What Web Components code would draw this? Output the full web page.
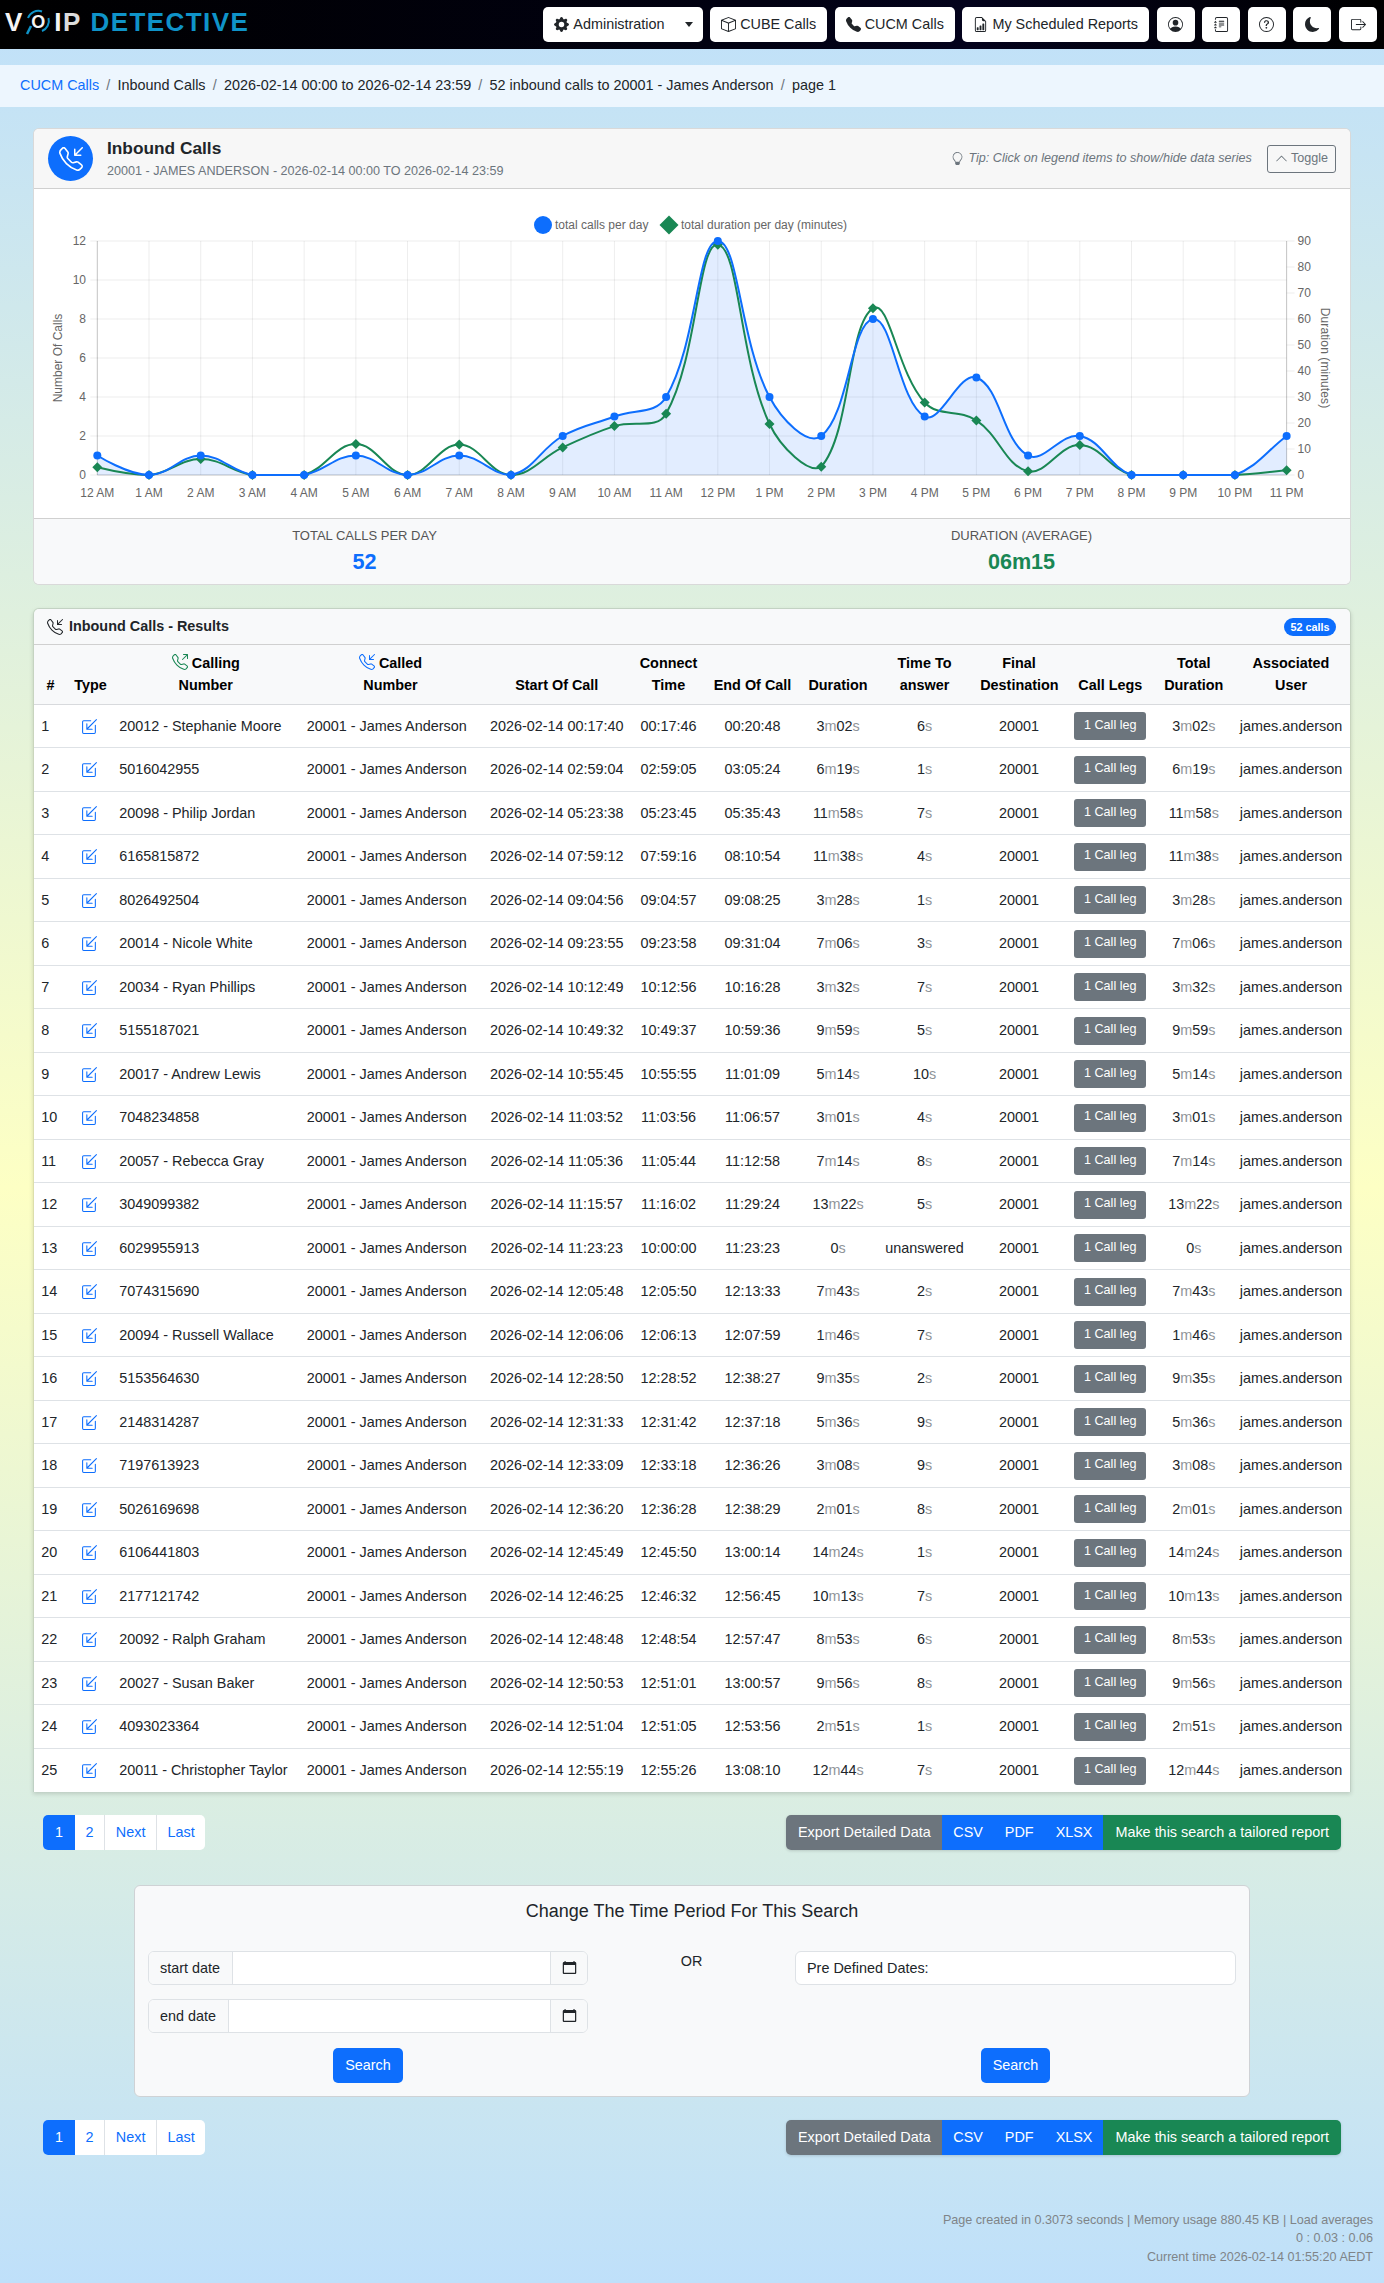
<!DOCTYPE html>
<html lang="en">
<head>
<meta charset="utf-8">
<title>Inbound Calls</title>
<style>
  html, body { margin: 0; padding: 0; }
  body {
    height: 2283px;
    overflow: hidden;
    font-family: "Liberation Sans", Arial, sans-serif;
    font-size: 14.4px;
    line-height: 1.5;
    color: #212529;
    background: linear-gradient(to bottom, #bfe0fa 0%, #fdffc4 52%, #bfe0fa 100%);
  }
</style>
</head>
<body>
<vd-navbar></vd-navbar>
<vd-breadcrumb>
  <a href="#">CUCM Calls</a>
  <span>Inbound Calls</span>
  <span>2026-02-14 00:00 to 2026-02-14 23:59</span>
  <span>52 inbound calls to 20001 - James Anderson</span>
  <span>page 1</span>
</vd-breadcrumb>
<vd-chart-card></vd-chart-card>
<vd-results-card></vd-results-card>
<vd-controls></vd-controls>
<vd-search-card></vd-search-card>
<vd-controls></vd-controls>
<vd-footer></vd-footer>

<script>
const ICONS = {
  gear: 'M9.405 1.05c-.413-1.4-2.397-1.4-2.81 0l-.1.34a1.464 1.464 0 0 1-2.105.872l-.31-.17c-1.283-.698-2.686.705-1.987 1.987l.169.311c.446.82.023 1.841-.872 2.105l-.34.1c-1.4.413-1.4 2.397 0 2.81l.34.1a1.464 1.464 0 0 1 .872 2.105l-.17.31c-.698 1.283.705 2.686 1.987 1.987l.311-.169a1.464 1.464 0 0 1 2.105.872l.1.34c.413 1.4 2.397 1.4 2.81 0l.1-.34a1.464 1.464 0 0 1 2.105-.872l.31.17c1.283.698 2.686-.705 1.987-1.987l-.169-.311a1.464 1.464 0 0 1 .872-2.105l.34-.1c1.4-.413 1.4-2.397 0-2.81l-.34-.1a1.464 1.464 0 0 1-.872-2.105l.17-.31c.698-1.283-.705-2.686-1.987-1.987l-.311.169a1.464 1.464 0 0 1-2.105-.872zM8 10.93a2.929 2.929 0 1 1 0-5.86 2.929 2.929 0 0 1 0 5.858z',
  box: 'M8.186 1.113a.5.5 0 0 0-.372 0L1.846 3.5 8 5.961 14.154 3.5zM15 4.239l-6.5 2.6v7.922l6.5-2.6V4.24zM7.5 14.762V6.838L1 4.239v7.925zM7.443.184a1.5 1.5 0 0 1 1.114 0l7.129 2.852A.5.5 0 0 1 16 3.5v8.662a1 1 0 0 1-.629.928l-7.185 2.874a.5.5 0 0 1-.372 0L.63 13.09a1 1 0 0 1-.63-.928V3.5a.5.5 0 0 1 .314-.464z',
  phone: 'M1.885.511a1.745 1.745 0 0 1 2.61.163L6.29 2.98c.329.423.445.974.315 1.494l-.547 2.19a.68.68 0 0 0 .178.643l2.457 2.457a.68.68 0 0 0 .644.178l2.189-.547a1.75 1.75 0 0 1 1.494.315l2.306 1.794c.829.645.905 1.87.163 2.611l-1.034 1.034c-.74.74-1.846 1.065-2.877.702a18.6 18.6 0 0 1-7.01-4.42 18.6 18.6 0 0 1-4.42-7.009c-.362-1.03-.037-2.137.703-2.877z',
  report: 'M10 13.5a.5.5 0 0 0 .5.5h1a.5.5 0 0 0 .5-.5v-6a.5.5 0 0 0-.5-.5h-1a.5.5 0 0 0-.5.5zm-2.5.5a.5.5 0 0 1-.5-.5v-4a.5.5 0 0 1 .5-.5h1a.5.5 0 0 1 .5.5v4a.5.5 0 0 1-.5.5zm-3 0a.5.5 0 0 1-.5-.5v-2a.5.5 0 0 1 .5-.5h1a.5.5 0 0 1 .5.5v2a.5.5 0 0 1-.5.5z M14 14V4.5L9.5 0H4a2 2 0 0 0-2 2v12a2 2 0 0 0 2 2h8a2 2 0 0 0 2-2M9.5 3A1.5 1.5 0 0 0 11 4.5h2V14a1 1 0 0 1-1 1H4a1 1 0 0 1-1-1V2a1 1 0 0 1 1-1h5.5z',
  person: 'M11 6a3 3 0 1 1-6 0 3 3 0 0 1 6 0 M0 8a8 8 0 1 1 16 0A8 8 0 0 1 0 8m8-7a7 7 0 0 0-5.468 11.37C3.242 11.226 4.805 10 8 10s4.757 1.225 5.468 2.37A7 7 0 0 0 8 1',
  journal: 'M5 10.5a.5.5 0 0 1 .5-.5h2a.5.5 0 0 1 0 1h-2a.5.5 0 0 1-.5-.5m0-2a.5.5 0 0 1 .5-.5h5a.5.5 0 0 1 0 1h-5a.5.5 0 0 1-.5-.5m0-2a.5.5 0 0 1 .5-.5h5a.5.5 0 0 1 0 1h-5a.5.5 0 0 1-.5-.5m0-2a.5.5 0 0 1 .5-.5h5a.5.5 0 0 1 0 1h-5a.5.5 0 0 1-.5-.5 M3 0h10a2 2 0 0 1 2 2v12a2 2 0 0 1-2 2H3a2 2 0 0 1-2-2v-1h1v1a1 1 0 0 0 1 1h10a1 1 0 0 0 1-1V2a1 1 0 0 0-1-1H3a1 1 0 0 0-1 1v1H1V2a2 2 0 0 1 2-2 M1 5v-.5a.5.5 0 0 1 1 0V5h.5a.5.5 0 0 1 0 1h-2a.5.5 0 0 1 0-1zm0 3v-.5a.5.5 0 0 1 1 0V8h.5a.5.5 0 0 1 0 1h-2a.5.5 0 0 1 0-1zm0 3v-.5a.5.5 0 0 1 1 0v.5h.5a.5.5 0 0 1 0 1h-2a.5.5 0 0 1 0-1z',
  question: 'M8 15A7 7 0 1 1 8 1a7 7 0 0 1 0 14m0 1A8 8 0 1 0 8 0a8 8 0 0 0 0 16 M5.255 5.786a.237.237 0 0 0 .241.247h.825c.138 0 .248-.113.266-.25.09-.656.54-1.134 1.342-1.134.686 0 1.314.343 1.314 1.168 0 .635-.374.927-.965 1.371-.673.489-1.206 1.06-1.168 1.987l.003.217a.25.25 0 0 0 .25.246h.811a.25.25 0 0 0 .25-.25v-.105c0-.718.273-.927 1.01-1.486.609-.463 1.244-.977 1.244-2.056 0-1.511-1.276-2.241-2.673-2.241-1.267 0-2.655.59-2.75 2.286m1.557 5.763c0 .533.425.927 1.01.927.609 0 1.028-.394 1.028-.927 0-.552-.42-.94-1.029-.94-.584 0-1.009.388-1.009.94',
  moon: 'M6 .278a.77.77 0 0 1 .08.858 7.2 7.2 0 0 0-.878 3.46c0 4.021 3.278 7.277 7.318 7.277q.792-.001 1.533-.16a.79.79 0 0 1 .81.316.73.73 0 0 1-.031.893A8.35 8.35 0 0 1 8.344 16C3.734 16 0 12.286 0 7.71 0 4.266 2.114 1.312 5.124.06A.75.75 0 0 1 6 .278',
  logout: 'M10 12.5a.5.5 0 0 1-.5.5h-8a.5.5 0 0 1-.5-.5v-9a.5.5 0 0 1 .5-.5h8a.5.5 0 0 1 .5.5v2a.5.5 0 0 0 1 0v-2A1.5 1.5 0 0 0 9.5 2h-8A1.5 1.5 0 0 0 0 3.5v9A1.5 1.5 0 0 0 1.5 14h8a1.5 1.5 0 0 0 1.5-1.5v-2a.5.5 0 0 0-1 0z M15.854 8.354a.5.5 0 0 0 0-.708l-3-3a.5.5 0 0 0-.708.708L14.293 7.5H5.5a.5.5 0 0 0 0 1h8.793l-2.147 2.146a.5.5 0 0 0 .708.708z',
  bulb: 'M2 6a6 6 0 1 1 10.174 4.31c-.203.196-.359.4-.453.619l-.762 1.769A.5.5 0 0 1 10.5 13a.5.5 0 0 1 0 1 .5.5 0 0 1 0 1l-.224.447a1 1 0 0 1-.894.553H6.618a1 1 0 0 1-.894-.553L5.5 15a.5.5 0 0 1 0-1 .5.5 0 0 1 0-1 .5.5 0 0 1-.46-.302l-.761-1.77a2 2 0 0 0-.453-.618A5.98 5.98 0 0 1 2 6m6-5a5 5 0 0 0-3.479 8.592c.263.254.514.564.676.941L5.83 12h4.342l.632-1.467c.162-.377.413-.687.676-.941A5 5 0 0 0 8 1',
  chevron: 'M7.646 4.646a.5.5 0 0 1 .708 0l6 6a.5.5 0 0 1-.708.708L8 5.707l-5.646 5.647a.5.5 0 0 1-.708-.708z',
  inbound: 'M15.854.146a.5.5 0 0 1 0 .708L11.707 5H14.5a.5.5 0 0 1 0 1h-4a.5.5 0 0 1-.5-.5v-4a.5.5 0 0 1 1 0v2.793L15.146.146a.5.5 0 0 1 .708 0m-12.2 1.182a.678.678 0 0 0-1.015-.063L1.605 2.3c-.483.484-.661 1.169-.45 1.77a17.6 17.6 0 0 0 4.168 6.608 17.6 17.6 0 0 0 6.608 4.168c.601.211 1.286.033 1.77-.45l1.034-1.034a.678.678 0 0 0-.063-1.015l-2.307-1.794a.68.68 0 0 0-.58-.122l-2.19.547a1.75 1.75 0 0 1-1.657-.459L5.482 8.062a1.75 1.75 0 0 1-.46-1.657l.548-2.19a.68.68 0 0 0-.122-.58zM1.884.511a1.745 1.745 0 0 1 2.612.163L6.29 2.98c.329.423.445.974.315 1.494l-.547 2.19a.68.68 0 0 0 .178.643l2.457 2.457a.68.68 0 0 0 .644.178l2.189-.547a1.75 1.75 0 0 1 1.494.315l2.306 1.794c.829.645.905 1.87.163 2.611l-1.034 1.034c-.74.74-1.846 1.065-2.877.702a18.6 18.6 0 0 1-7.01-4.42 18.6 18.6 0 0 1-4.42-7.009c-.362-1.03-.037-2.137.703-2.877z',
  outbound: 'M3.654 1.328a.678.678 0 0 0-1.015-.063L1.605 2.3c-.483.484-.661 1.169-.45 1.77a17.6 17.6 0 0 0 4.168 6.608 17.6 17.6 0 0 0 6.608 4.168c.601.211 1.286.033 1.77-.45l1.034-1.034a.678.678 0 0 0-.063-1.015l-2.307-1.794a.68.68 0 0 0-.58-.122l-2.19.547a1.75 1.75 0 0 1-1.657-.459L5.482 8.062a1.75 1.75 0 0 1-.46-1.657l.548-2.19a.68.68 0 0 0-.122-.58zM1.884.511a1.745 1.745 0 0 1 2.612.163L6.29 2.98c.329.423.445.974.315 1.494l-.547 2.19a.68.68 0 0 0 .178.643l2.457 2.457a.68.68 0 0 0 .644.178l2.189-.547a1.75 1.75 0 0 1 1.494.315l2.306 1.794c.829.645.905 1.87.163 2.611l-1.034 1.034c-.74.74-1.846 1.065-2.877.702a18.6 18.6 0 0 1-7.01-4.42 18.6 18.6 0 0 1-4.42-7.009c-.362-1.03-.037-2.137.703-2.877zM11 .5a.5.5 0 0 1 .5-.5h4a.5.5 0 0 1 .5.5v4a.5.5 0 0 1-1 0V1.707l-4.146 4.147a.5.5 0 0 1-.708-.708L14.293 1H11.5a.5.5 0 0 1-.5-.5',
  boxin: 'M9.636 2.5a.5.5 0 0 0-.5-.5H2.5A1.5 1.5 0 0 0 1 3.5v10A1.5 1.5 0 0 0 2.5 15h10a1.5 1.5 0 0 0 1.5-1.5V6.864a.5.5 0 0 0-1 0V13.5a.5.5 0 0 1-.5.5h-10a.5.5 0 0 1-.5-.5v-10a.5.5 0 0 1 .5-.5h6.636a.5.5 0 0 0 .5-.5 M5 10.5a.5.5 0 0 0 .5.5h5a.5.5 0 0 0 0-1H6.707l8.147-8.146a.5.5 0 0 0-.708-.708L6 9.293V5.5a.5.5 0 0 0-1 0z',
  calendar: 'M2.5 1.2h1.6v1H12V1.2h1.6v1h.4A1.2 1.2 0 0 1 15.2 3.4v10.4A1.2 1.2 0 0 1 14 15H2a1.2 1.2 0 0 1-1.2-1.2V3.4A1.2 1.2 0 0 1 2 2.2h.5zM2.1 5.4v8.1c0 .1.1.2.2.2h11.4c.1 0 .2-.1.2-.2V5.4z'
};

class VdIcon extends HTMLElement {
  connectedCallback() {
    const size = this.getAttribute('size') || '16';
    this.root = this.attachShadow({ mode: 'open' });
    this.root.innerHTML = `
      <style>
        :host { display: inline-flex; flex: none; line-height: 0; }
      </style>
      <svg xmlns="http://www.w3.org/2000/svg" width="${size}" height="${size}" viewBox="0 0 16 16" fill="currentColor" fill-rule="evenodd">
        <path d="${ICONS[this.getAttribute('name')]}"/>
      </svg>`;
  }
}
customElements.define('vd-icon', VdIcon);

class VdNavButton extends HTMLElement {
  constructor() {
    super();
    this.root = this.attachShadow({ mode: 'open' });
    this.root.innerHTML = `
      <style>
        :host {
          display: inline-flex;
          align-items: center;
          justify-content: center;
          gap: 4px;
          height: 35px;
          min-width: 38px;
          box-sizing: border-box;
          padding: 0 11px;
          background: #fff;
          border-radius: 5px;
          color: #212529;
          font-size: 14.4px;
          white-space: nowrap;
        }
      </style>
      <slot></slot>`;
  }
}
customElements.define('vd-nav-button', VdNavButton);

class VdNavbar extends HTMLElement {
  constructor() {
    super();
    this.root = this.attachShadow({ mode: 'open' });
    this.root.innerHTML = `
      <style>
        :host {
          display: flex;
          align-items: center;
          justify-content: space-between;
          height: 49px;
          box-sizing: border-box;
          padding: 0 7px 0 5px;
          background: linear-gradient(90deg, #000 0%, #010112 55%, #03021c 70%, #000 100%);
        }
        .logo {
          display: flex;
          align-items: center;
          height: 34px;
          margin-top: -6px;
          font-weight: 700;
          font-size: 26px;
          line-height: 34px;
          color: #f4f4f4;
        }
        .ring {
          position: relative;
          display: flex;
          justify-content: center;
          width: 26px;
          margin: 0 3px 0 3px;
          font-size: 18px;
        }
        .ring svg { position: absolute; left: 0; top: 4px; }
        .p { margin-left: 1.5px; color: #dcdcdc; }
        .detective { margin-left: 10px; letter-spacing: 1.45px; color: #0f93c8; }
        nav { display: flex; gap: 7.6px; }
        .caret {
          width: 0;
          height: 0;
          margin-left: 16px;
          margin-right: -1px;
          border-top: 5px solid #212529;
          border-left: 4px solid transparent;
          border-right: 4px solid transparent;
        }
      </style>
      <div class="logo">
        <span>V</span>
        <span class="ring">O
          <svg width="26" height="30" viewBox="0 0 26 30" fill="none" stroke="#0f93c8" stroke-width="2">
            <path d="M3 9 A11 11 0 0 1 17 2.5"/>
            <path d="M23.5 9 A11 11 0 0 1 17 22"/>
            <path d="M6 17 L2 25" stroke-width="2.5"/>
          </svg>
        </span>
        <span>I</span>
        <span class="p">P</span>
        <span class="detective">DETECTIVE</span>
      </div>
      <nav>
        <vd-nav-button><vd-icon name="gear" size="15"></vd-icon> Administration <span class="caret"></span></vd-nav-button>
        <vd-nav-button><vd-icon name="box" size="15"></vd-icon> CUBE Calls</vd-nav-button>
        <vd-nav-button><vd-icon name="phone" size="15"></vd-icon> CUCM Calls</vd-nav-button>
        <vd-nav-button><vd-icon name="report" size="15"></vd-icon> My Scheduled Reports</vd-nav-button>
        <vd-nav-button><vd-icon name="person" size="15"></vd-icon></vd-nav-button>
        <vd-nav-button><vd-icon name="journal" size="15"></vd-icon></vd-nav-button>
        <vd-nav-button><vd-icon name="question" size="15"></vd-icon></vd-nav-button>
        <vd-nav-button><vd-icon name="moon" size="15"></vd-icon></vd-nav-button>
        <vd-nav-button><vd-icon name="logout" size="15"></vd-icon></vd-nav-button>
      </nav>`;
  }
}
customElements.define('vd-navbar', VdNavbar);

class VdBreadcrumb extends HTMLElement {
  constructor() {
    super();
    this.root = this.attachShadow({ mode: 'open' });
    this.root.innerHTML = `
      <style>
        :host {
          display: flex;
          align-items: center;
          height: 42px;
          box-sizing: border-box;
          margin-top: 16px;
          padding: 0 20px;
          background: #edf6fe;
          font-size: 14.4px;
          color: #212529;
        }
        ::slotted(*) { white-space: nowrap; color: #212529; text-decoration: none; }
        ::slotted(a) { color: #0d6efd; }
        ::slotted(*:not(:first-child))::before { content: "/"; color: #6c757d; padding: 0 7.2px; }
      </style>
      <slot></slot>`;
  }
}
customElements.define('vd-breadcrumb', VdBreadcrumb);

class VdChart extends HTMLElement {
  constructor() {
    super();
    this.root = this.attachShadow({ mode: 'open' });
    this.calls = [1, 0, 1, 0, 0, 1, 0, 1, 0, 2, 3, 4, 12, 4, 2, 8, 3, 5, 1, 2, 0, 0, 0, 2];
    this.minutes = [2.95, 0, 6.15, 0, 0, 11.9, 0, 11.7, 0, 10.6, 18.8, 23.6, 88.6, 19.6, 3.2, 64.1, 27.9, 21, 1.4, 11.5, 0, 0, 0, 1.8];
    this.hours = ['12 AM', '1 AM', '2 AM', '3 AM', '4 AM', '5 AM', '6 AM', '7 AM', '8 AM', '9 AM', '10 AM', '11 AM',
      '12 PM', '1 PM', '2 PM', '3 PM', '4 PM', '5 PM', '6 PM', '7 PM', '8 PM', '9 PM', '10 PM', '11 PM'];
    this.renderHTML();
  }

  // same bezier rule as a tension 0.4 line chart, control points capped to the plot area
  spline(points) {
    const top = 241;
    const bottom = 475;
    const cap = (y) => Math.min(bottom, Math.max(top, y));
    let d = `M${points[0].x} ${points[0].y}`;
    let out = points[0];
    for (let i = 1; i < points.length; i++) {
      const prev = points[i - 1];
      const cur = points[i];
      const next = points[i + 1] || cur;
      const d01 = Math.hypot(cur.x - prev.x, cur.y - prev.y);
      const d12 = Math.hypot(next.x - cur.x, next.y - cur.y);
      const sum = d01 + d12;
      const fa = 0.4 * (sum ? d01 / sum : 0);
      const fb = 0.4 * (sum ? d12 / sum : 0);
      const inX = cur.x - fa * (next.x - prev.x);
      const inY = cap(cur.y - fa * (next.y - prev.y));
      d += `C${out.cx ?? out.x} ${out.cy ?? out.y} ${inX} ${inY} ${cur.x} ${cur.y}`;
      out = { x: cur.x, y: cur.y, cx: cur.x + fb * (next.x - prev.x), cy: cap(cur.y + fb * (next.y - prev.y)) };
    }
    return d;
  }

  renderHTML() {
    const left = 97.3;
    const step = 51.71;
    const bottom = 475;
    const right = left + step * 23;
    const px = (i) => left + i * step;
    const blue = this.calls.map((v, i) => ({ x: px(i), y: bottom - v * 19.5 }));
    const green = this.minutes.map((v, i) => ({ x: px(i), y: bottom - v * 2.6 }));
    const blueLine = this.spline(blue);
    const greenLine = this.spline(green);
    const diamond = (x, y, r) => `M${x} ${y - r}L${x + r} ${y}L${x} ${y + r}L${x - r} ${y}Z`;

    let grid = '';
    for (let i = 0; i < 24; i++) {
      grid += `<line x1="${px(i)}" y1="241" x2="${px(i)}" y2="475" class="grid"/>`;
      grid += `<text x="${px(i)}" y="497" text-anchor="middle">${this.hours[i]}</text>`;
    }
    for (let v = 0; v <= 12; v += 2) {
      const y = bottom - v * 19.5;
      grid += `<line x1="${left - 7}" y1="${y}" x2="${right}" y2="${y}" class="grid"/>`;
      grid += `<text x="86" y="${y + 3.5}" text-anchor="end">${v}</text>`;
    }
    for (let v = 0; v <= 90; v += 10) {
      const y = bottom - v * 2.6;
      grid += `<line x1="${right}" y1="${y}" x2="${right + 8}" y2="${y}" class="grid"/>`;
      grid += `<text x="1297.5" y="${y + 3.5}">${v}</text>`;
    }

    this.root.innerHTML = `
      <style>
        :host { display: block; height: 329px; }
        svg { display: block; }
        text { font: 12px "Liberation Sans", Arial, sans-serif; fill: #666; }
        .grid { stroke: rgba(0, 0, 0, 0.07); stroke-width: 1; }
        .axis { stroke: rgba(0, 0, 0, 0.18); stroke-width: 1; }
      </style>
      <svg xmlns="http://www.w3.org/2000/svg" width="1316" height="329" viewBox="34 189 1316 329">
        <circle cx="543" cy="225" r="9" fill="#0d6efd"/>
        <text x="555" y="228.5">total calls per day</text>
        <path d="${diamond(669, 225, 9.5)}" fill="#198754"/>
        <text x="681" y="228.5">total duration per day (minutes)</text>
        ${grid}
        <line x1="${left}" y1="241" x2="${left}" y2="475" class="axis"/>
        <line x1="${right}" y1="241" x2="${right}" y2="475" class="axis"/>
        <line x1="${left}" y1="475" x2="${right}" y2="475" class="axis"/>
        <text transform="translate(62 358) rotate(-90)" text-anchor="middle">Number Of Calls</text>
        <text transform="translate(1320.5 358) rotate(90)" text-anchor="middle" style="letter-spacing:.1px">Duration (minutes)</text>
        <path d="${blueLine}L${right} ${bottom}L${left} ${bottom}Z" fill="rgba(13,110,253,0.12)"/>
        <path d="${greenLine}" fill="none" stroke="#198754" stroke-width="2"/>
        ${green.map((p) => `<path d="${diamond(p.x, p.y, 5)}" fill="#198754"/>`).join('')}
        <path d="${blueLine}" fill="none" stroke="#0d6efd" stroke-width="2"/>
        ${blue.map((p) => `<circle cx="${p.x}" cy="${p.y}" r="4" fill="#0d6efd"/>`).join('')}
      </svg>`;
  }
}
customElements.define('vd-chart', VdChart);

class VdChartCard extends HTMLElement {
  constructor() {
    super();
    this.root = this.attachShadow({ mode: 'open' });
    this.root.innerHTML = `
      <style>
        :host {
          display: block;
          margin: 21px 33px 0;
          background: #fff;
          border: 1px solid rgba(0, 0, 0, 0.15);
          border-radius: 6px;
          overflow: hidden;
        }
        header {
          display: flex;
          align-items: center;
          height: 60px;
          box-sizing: border-box;
          padding: 0 14px 0 14px;
          background: #f7f7f7;
          border-bottom: 1px solid #d0d0d0;
        }
        .badge {
          display: flex;
          align-items: center;
          justify-content: center;
          width: 45px;
          height: 45px;
          border-radius: 50%;
          background: #0d6efd;
          color: #fff;
        }
        .titles { margin-left: 14px; flex: 1; }
        h1 { margin: 0; font-size: 17.3px; line-height: 22px; font-weight: 700; color: #212529; }
        .sub { margin-top: 3px; font-size: 12.6px; line-height: 18px; color: #6c757d; }
        .tip { display: flex; align-items: center; gap: 4px; font-size: 12.6px; font-style: italic; color: #6c757d; }
        .toggle {
          display: flex;
          align-items: center;
          gap: 3px;
          height: 28px;
          box-sizing: border-box;
          margin-left: 15px;
          padding: 0 7px;
          border: 1px solid #6c757d;
          border-radius: 3px;
          font-size: 12.6px;
          color: #6c757d;
        }
        .strip {
          display: grid;
          grid-template-columns: 1fr 1fr;
          height: 66px;
          padding: 7px 0 0 2px;
          box-sizing: border-box;
          background: #f8f9fa;
          border-top: 1px solid #d0d0d0;
          text-align: center;
        }
        .label { font-size: 13px; line-height: 20px; color: #555; }
        .value { margin-top: 1px; font-size: 21.6px; line-height: 30px; font-weight: 700; }
        .blue { color: #0d6efd; }
        .green { color: #198754; }
      </style>
      <header>
        <div class="badge"><vd-icon name="inbound" size="24"></vd-icon></div>
        <div class="titles">
          <h1>Inbound Calls</h1>
          <div class="sub">20001 - JAMES ANDERSON - 2026-02-14 00:00 TO 2026-02-14 23:59</div>
        </div>
        <div class="tip"><vd-icon name="bulb" size="13"></vd-icon><span>Tip: Click on legend items to show/hide data series</span></div>
        <div class="toggle"><vd-icon name="chevron" size="13"></vd-icon><span>Toggle</span></div>
      </header>
      <vd-chart></vd-chart>
      <div class="strip">
        <div><div class="label">TOTAL CALLS PER DAY</div><div class="value blue">52</div></div>
        <div><div class="label">DURATION (AVERAGE)</div><div class="value green">06m15</div></div>
      </div>`;
  }
}
customElements.define('vd-chart-card', VdChartCard);

const CALLS = [
  ['20012 - Stephanie Moore', '00:17:40', '00:17:46', '00:20:48', '3m02s', '6s'],
  ['5016042955', '02:59:04', '02:59:05', '03:05:24', '6m19s', '1s'],
  ['20098 - Philip Jordan', '05:23:38', '05:23:45', '05:35:43', '11m58s', '7s'],
  ['6165815872', '07:59:12', '07:59:16', '08:10:54', '11m38s', '4s'],
  ['8026492504', '09:04:56', '09:04:57', '09:08:25', '3m28s', '1s'],
  ['20014 - Nicole White', '09:23:55', '09:23:58', '09:31:04', '7m06s', '3s'],
  ['20034 - Ryan Phillips', '10:12:49', '10:12:56', '10:16:28', '3m32s', '7s'],
  ['5155187021', '10:49:32', '10:49:37', '10:59:36', '9m59s', '5s'],
  ['20017 - Andrew Lewis', '10:55:45', '10:55:55', '11:01:09', '5m14s', '10s'],
  ['7048234858', '11:03:52', '11:03:56', '11:06:57', '3m01s', '4s'],
  ['20057 - Rebecca Gray', '11:05:36', '11:05:44', '11:12:58', '7m14s', '8s'],
  ['3049099382', '11:15:57', '11:16:02', '11:29:24', '13m22s', '5s'],
  ['6029955913', '11:23:23', '10:00:00', '11:23:23', '0s', 'unanswered'],
  ['7074315690', '12:05:48', '12:05:50', '12:13:33', '7m43s', '2s'],
  ['20094 - Russell Wallace', '12:06:06', '12:06:13', '12:07:59', '1m46s', '7s'],
  ['5153564630', '12:28:50', '12:28:52', '12:38:27', '9m35s', '2s'],
  ['2148314287', '12:31:33', '12:31:42', '12:37:18', '5m36s', '9s'],
  ['7197613923', '12:33:09', '12:33:18', '12:36:26', '3m08s', '9s'],
  ['5026169698', '12:36:20', '12:36:28', '12:38:29', '2m01s', '8s'],
  ['6106441803', '12:45:49', '12:45:50', '13:00:14', '14m24s', '1s'],
  ['2177121742', '12:46:25', '12:46:32', '12:56:45', '10m13s', '7s'],
  ['20092 - Ralph Graham', '12:48:48', '12:48:54', '12:57:47', '8m53s', '6s'],
  ['20027 - Susan Baker', '12:50:53', '12:51:01', '13:00:57', '9m56s', '8s'],
  ['4093023364', '12:51:04', '12:51:05', '12:53:56', '2m51s', '1s'],
  ['20011 - Christopher Taylor', '12:55:19', '12:55:26', '13:08:10', '12m44s', '7s']
];

// 3m02s -> the unit letters are drawn lighter than the numbers
const duration = (text) => text.replace(/[ms]/g, (unit) => `<i>${unit}</i>`);

class VdCallsTable extends HTMLElement {
  constructor() {
    super();
    this.root = this.attachShadow({ mode: 'open' });
    this.renderHTML();
  }

  renderRow(call, index) {
    const [from, start, connect, end, length, answer] = call;
    return `
      <tr>
        <td class="l">${index + 1}</td>
        <td><vd-icon class="type" name="boxin" size="17"></vd-icon></td>
        <td class="l">${from}</td>
        <td class="l">20001 - James Anderson</td>
        <td>2026-02-14 ${start}</td>
        <td>${connect}</td>
        <td>${end}</td>
        <td>${duration(length)}</td>
        <td>${answer === 'unanswered' ? answer : duration(answer)}</td>
        <td>20001</td>
        <td><span class="legs">1 Call leg</span></td>
        <td>${duration(length)}</td>
        <td>james.anderson</td>
      </tr>`;
  }

  renderHTML() {
    const widths = [33, 45, 187.5, 182, 150.5, 73, 95, 76, 97, 92, 90.5, 76.5, 118];
    this.root.innerHTML = `
      <style>
        :host { display: block; }
        table { width: 1316px; table-layout: fixed; border-collapse: collapse; font-size: 14.4px; line-height: 21.6px; }
        th, td { padding: 7.2px; text-align: center; white-space: nowrap; }
        th { padding-top: 8.2px; font-weight: 700; vertical-align: bottom; background: #f8f9fa; color: #000; border-bottom: 1px solid #d8dadd; }
        td { padding-top: 7.7px; padding-bottom: 6.7px; vertical-align: middle; background: #fff; border-bottom: 1px solid #dee2e6; color: #212529; }
        tbody tr { height: 43.5px; }
        tr:last-child td { border-bottom: 0; }
        td.l { text-align: left; }
        i { font-style: normal; color: #8f9499; }
        .type { color: #0d6efd; vertical-align: -4px; }
        .out { color: #198754; vertical-align: -2px; }
        .in { color: #0d6efd; vertical-align: -2px; }
        .legs {
          display: inline-block;
          min-width: 72px;
          box-sizing: border-box;
          padding: 3.6px 0 5.6px;
          background: #6c757d;
          border-radius: 3px;
          color: #fff;
          font-size: 12.6px;
          line-height: 18.9px;
          vertical-align: middle;
        }
      </style>
      <table>
        <colgroup>${widths.map((w) => `<col style="width:${w}px">`).join('')}</colgroup>
        <thead>
          <tr>
            <th>#</th>
            <th>Type</th>
            <th><vd-icon class="out" name="outbound" size="16"></vd-icon> Calling<br>Number</th>
            <th><vd-icon class="in" name="inbound" size="16"></vd-icon> Called<br>Number</th>
            <th>Start Of Call</th>
            <th>Connect<br>Time</th>
            <th>End Of Call</th>
            <th>Duration</th>
            <th>Time To<br>answer</th>
            <th>Final<br>Destination</th>
            <th>Call Legs</th>
            <th>Total<br>Duration</th>
            <th>Associated<br>User</th>
          </tr>
        </thead>
        <tbody>${CALLS.map((call, i) => this.renderRow(call, i)).join('')}</tbody>
      </table>`;
  }
}
customElements.define('vd-calls-table', VdCallsTable);

class VdResultsCard extends HTMLElement {
  constructor() {
    super();
    this.root = this.attachShadow({ mode: 'open' });
    this.root.innerHTML = `
      <style>
        :host {
          display: block;
          margin: 23px 33px 0;
          border: 1px solid rgba(0, 0, 0, 0.12);
          border-bottom: 0;
          border-radius: 6px 6px 0 0;
          overflow: hidden;
          box-shadow: 0 2px 4px rgba(0, 0, 0, 0.15);
        }
        header {
          display: flex;
          align-items: center;
          height: 36px;
          box-sizing: border-box;
          padding: 0 14px 0 13px;
          background: #f8f9fa;
          border-bottom: 1px solid #d0d0d0;
          font-weight: 700;
          color: #212529;
        }
        header span { margin-left: 6px; flex: 1; }
        .count {
          flex: none;
          height: 18px;
          padding: 0 6.5px;
          border-radius: 9px;
          background: #0d6efd;
          color: #fff;
          font-size: 10.8px;
          line-height: 18px;
        }
      </style>
      <header>
        <vd-icon name="inbound" size="16"></vd-icon>
        <span>Inbound Calls - Results</span>
        <div class="count">52 calls</div>
      </header>
      <vd-calls-table></vd-calls-table>`;
  }
}
customElements.define('vd-results-card', VdResultsCard);

class VdControls extends HTMLElement {
  constructor() {
    super();
    this.root = this.attachShadow({ mode: 'open' });
    this.root.innerHTML = `
      <style>
        :host {
          display: flex;
          justify-content: space-between;
          margin-top: 23px;
          padding: 0 43px;
          font-size: 14.4px;
          line-height: 35px;
        }
        .pages, .export { display: flex; height: 35px; border-radius: 5px; }
        .pages { background: #fff; }
        .pages a {
          padding: 0 10.6px;
          color: #0d6efd;
          border-left: 1px solid #dee2e6;
        }
        .pages a:first-child { border-left: 0; }
        .pages .on { background: #0d6efd; color: #fff; border-radius: 5px 0 0 5px; padding: 0 12px; }
        .pages .on + a { border-left: 0; }
        .export { color: #fff; overflow: hidden; box-shadow: 0 1px 3px rgba(0, 0, 0, 0.15); }
        .export span { padding: 0 11px; }
        .gray { background: #6c757d; padding: 0 11.5px !important; }
        .blue { background: #0d6efd; display: flex; }
        .green { background: #198754; padding: 0 12px !important; }
      </style>
      <div class="pages"><a class="on">1</a><a>2</a><a>Next</a><a>Last</a></div>
      <div class="export">
        <span class="gray">Export Detailed Data</span>
        <div class="blue"><span>CSV</span><span>PDF</span><span>XLSX</span></div>
        <span class="green">Make this search a tailored report</span>
      </div>`;
  }
}
customElements.define('vd-controls', VdControls);

class VdDateInput extends HTMLElement {
  constructor() {
    super();
    this.root = this.attachShadow({ mode: 'open' });
    this.root.innerHTML = `
      <style>
        :host {
          display: flex;
          height: 34px;
          box-sizing: border-box;
          border: 1px solid #dee2e6;
          border-radius: 6px;
          overflow: hidden;
          background: #fff;
          font-size: 14.4px;
          line-height: 32px;
        }
        .label { padding: 0 12px 0 11px; background: #f8f9fa; border-right: 1px solid #dee2e6; }
        .field { flex: 1; }
        .pick {
          display: flex;
          align-items: center;
          justify-content: center;
          width: 36px;
          background: #f8f9fa;
          border-left: 1px solid #dee2e6;
        }
      </style>
      <div class="label"><slot></slot></div>
      <div class="field"></div>
      <div class="pick"><vd-icon name="calendar" size="15"></vd-icon></div>`;
  }
}
customElements.define('vd-date-input', VdDateInput);

class VdSearchCard extends HTMLElement {
  constructor() {
    super();
    this.root = this.attachShadow({ mode: 'open' });
    this.root.innerHTML = `
      <style>
        :host {
          display: block;
          width: 1116px;
          box-sizing: border-box;
          margin: 35px auto 0;
          padding: 12px 13px 13px;
          background: #f8f9fa;
          border: 1px solid #cfd2d5;
          border-radius: 6px;
        }
        h2 { margin: 0 0 26px; font-size: 18px; line-height: 27px; font-weight: 400; text-align: center; color: #212529; }
        .cols { display: grid; grid-template-columns: 440px 1fr 441px; }
        .col { display: flex; flex-direction: column; gap: 14px; }
        .or { text-align: center; line-height: 21px; }
        .select {
          height: 34px;
          box-sizing: border-box;
          padding: 0 11px;
          background: #fff;
          border: 1px solid #dee2e6;
          border-radius: 6px;
          line-height: 32px;
        }
        .go {
          align-self: center;
          height: 35px;
          margin-top: auto;
          padding: 0 12px;
          background: #0d6efd;
          border-radius: 5px;
          color: #fff;
          line-height: 35px;
        }
        .col:first-child .go { margin-top: 1px; }
      </style>
      <h2>Change The Time Period For This Search</h2>
      <div class="cols">
        <div class="col">
          <vd-date-input>start date</vd-date-input>
          <vd-date-input>end date</vd-date-input>
          <div class="go">Search</div>
        </div>
        <div class="or">OR</div>
        <div class="col">
          <div class="select">Pre Defined Dates:</div>
          <div class="go">Search</div>
        </div>
      </div>`;
  }
}
customElements.define('vd-search-card', VdSearchCard);

class VdFooter extends HTMLElement {
  constructor() {
    super();
    this.root = this.attachShadow({ mode: 'open' });
    this.root.innerHTML = `
      <style>
        :host {
          display: block;
          margin-top: 56px;
          padding-right: 11px;
          text-align: right;
          font-size: 12.6px;
          line-height: 18.9px;
          color: #7f8488;
        }
      </style>
      <div>Page created in 0.3073 seconds | Memory usage 880.45 KB | Load averages</div>
      <div>0 : 0.03 : 0.06</div>
      <div>Current time 2026-02-14 01:55:20 AEDT</div>`;
  }
}
customElements.define('vd-footer', VdFooter);
</script>
</body>
</html>
